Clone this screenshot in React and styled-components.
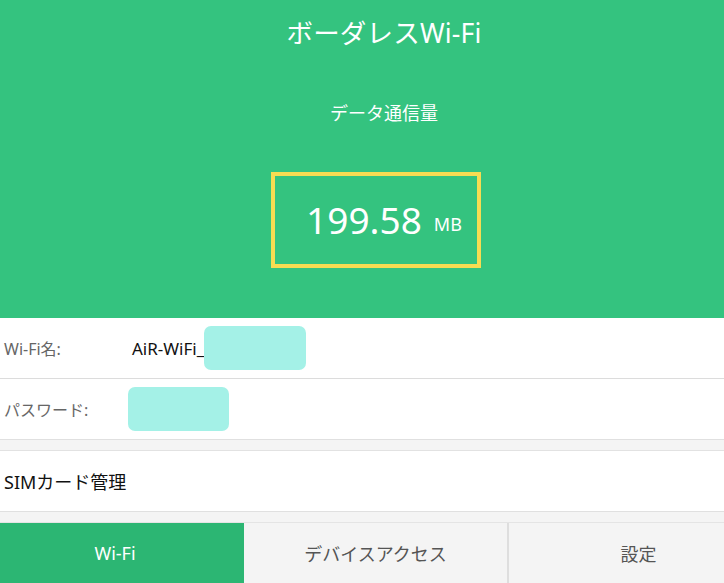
import React from 'react';
import styled, { createGlobalStyle } from 'styled-components';

const GlobalStyle = createGlobalStyle`
  html, body {
    margin: 0;
    padding: 0;
    background: #f4f4f4;
    font-family: "Noto Sans", "Noto Sans CJK JP", sans-serif;
  }
`;

const Page = styled.div`
  width: 724px;
  height: 583px;
  display: flex;
  flex-direction: column;
  background: #f4f4f4;
  overflow: hidden;
`;

/* the hero content sits a little right of the frame centre, as in the app */
const Hero = styled.header`
  height: 318px;
  padding-left: 44px;
  box-sizing: border-box;
  background: #34c37f;
  color: #fff;
  display: flex;
  flex-direction: column;
  align-items: center;
`;

const Title = styled.h1`
  margin: 14px 0 0;
  font-size: 26.5px;
  font-weight: 400;
  line-height: 38px;
  letter-spacing: 0.2px;
`;

const Caption = styled.div`
  margin-top: 48px;
  font-size: 18px;
  line-height: 26px;
`;

const UsageBox = styled.div`
  margin-top: 46px;
  margin-right: 16px;
  width: 186px;
  height: 88px;
  border: 4px solid #f7dc52;
  display: flex;
  align-items: center;
  justify-content: center;
  gap: 12px;
  padding-left: 16px;
`;

const Amount = styled.span`
  font-size: 37px;
  line-height: 40px;
`;

const Unit = styled.span`
  font-size: 18px;
  margin-top: 8px;
`;

const List = styled.section`
  background: #fff;
  border-bottom: 1px solid #e0e0e0;
`;

const Row = styled.div`
  height: 60px;
  display: flex;
  align-items: center;
  padding-left: 4px;
  & + & {
    border-top: 1px solid #dcdcdc;
  }
`;

const Label = styled.span`
  width: ${p => p.$w}px;
  color: #666;
  font-size: 16px;
`;

const Value = styled.span`
  display: flex;
  align-items: center;
  color: #111;
  font-size: 17px;
`;

const Mask = styled.span`
  display: inline-block;
  width: ${p => p.$w}px;
  height: 44px;
  background: #a4f1e7;
  border-radius: 7px;
`;

const Spacer = styled.div`
  height: 10px;
  border-bottom: 1px solid #e2e2e2;
`;

const MenuItem = styled.div`
  height: 60px;
  background: #fff;
  display: flex;
  align-items: center;
  padding-left: 4px;
  font-size: 18px;
  color: #111;
  border-bottom: 1px solid #e0e0e0;
`;

const TabBar = styled.nav`
  margin-top: 10px;
  flex: 1;
  display: grid;
  grid-template-columns: 244px 263px 1fr;
  border-top: 1px solid #e4e4e4;
`;

const Tab = styled.div`
  display: flex;
  align-items: center;
  justify-content: center;
  font-size: 18px;
  background: ${p => (p.$active ? '#2cb673' : '#f4f4f4')};
  color: ${p => (p.$active ? '#fff' : '#555')};
  border-left: ${p => (p.$divider ? '2px solid #dedede' : 'none')};
  padding-left: ${p => p.$pl || 0}px;
  padding-right: ${p => p.$pr || 0}px;
`;

export default function App() {
  return (
    <Page>
      <GlobalStyle />
      <Hero>
        <Title>ボーダレスWi-Fi</Title>
        <Caption>データ通信量</Caption>
        <UsageBox>
          <Amount>199.58</Amount>
          <Unit>MB</Unit>
        </UsageBox>
      </Hero>
      <List>
        <Row>
          <Label $w={128}>Wi-Fi名:</Label>
          <Value>
            AiR-WiFi_
            <Mask $w={102} />
          </Value>
        </Row>
        <Row>
          <Label $w={124}>パスワード:</Label>
          <Value>
            <Mask $w={101} />
          </Value>
        </Row>
      </List>
      <Spacer />
      <MenuItem>SIMカード管理</MenuItem>
      <TabBar>
        <Tab $active $pr={14}>Wi-Fi</Tab>
        <Tab>デバイスアクセス</Tab>
        <Tab $divider $pl={44}>設定</Tab>
      </TabBar>
    </Page>
  );
}
